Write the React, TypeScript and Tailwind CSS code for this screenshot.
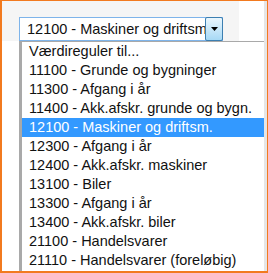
import React from "react";

const items = [
  "Værdireguler til...",
  "11100 - Grunde og bygninger",
  "11300 - Afgang i år",
  "11400 - Akk.afskr. grunde og bygn.",
  "12100 - Maskiner og driftsm.",
  "12300 - Afgang i år",
  "12400 - Akk.afskr. maskiner",
  "13100 - Biler",
  "13300 - Afgang i år",
  "13400 - Akk.afskr. biler",
  "21100 - Handelsvarer",
  "21110 - Handelsvarer (foreløbig)",
];

export default function App() {
  return (
    <div
      className="w-[268px] h-[273px] border-l-2 border-t border-r border-b-2 border-[#f27a1f] bg-white flex overflow-hidden"
      style={{ fontFamily: '"Liberation Sans", Arial, sans-serif' }}
    >
      <div className="flex-1 flex flex-col min-w-0">
        <div className="h-[40px] flex">
          <div className="w-[237px] bg-[#f5f5f5] pt-[16px] pl-[17px]">
            <div className="w-[204px] h-[24px] border border-[#7eb4ea] bg-white flex">
              <div className="flex-1 overflow-hidden whitespace-nowrap text-[14.5px] leading-[22px] pl-[7px] text-[#111]">
                12100 - Maskiner og driftsm.
              </div>
              <div className="w-[18px] h-[24px] -mt-px -mr-px border border-[#3c7fb1] rounded-[2px] bg-gradient-to-b from-[#eaf6fd] to-[#a7d9f5] flex items-center justify-center">
                <svg width="7" height="4" viewBox="0 0 7 4">
                  <path d="M0 0H7L3.5 4Z" fill="#000" />
                </svg>
              </div>
            </div>
          </div>
          <div className="flex-1 bg-white" />
        </div>
        <div className="flex-1 ml-[17px] border-l-[3px] border-t border-[#a9a9a9] bg-white">
          {items.map((t, i) => (
            <div
              key={i}
              className={
                "h-[19px] leading-[19px] pl-[7px] text-[14.5px] whitespace-nowrap " +
                (i === 4 ? "bg-[#3399ff] text-white" : "text-[#111]")
              }
            >
              {t}
            </div>
          ))}
        </div>
      </div>
      <div className="w-[3px] bg-[#e6e6e6]" />
    </div>
  );
}
